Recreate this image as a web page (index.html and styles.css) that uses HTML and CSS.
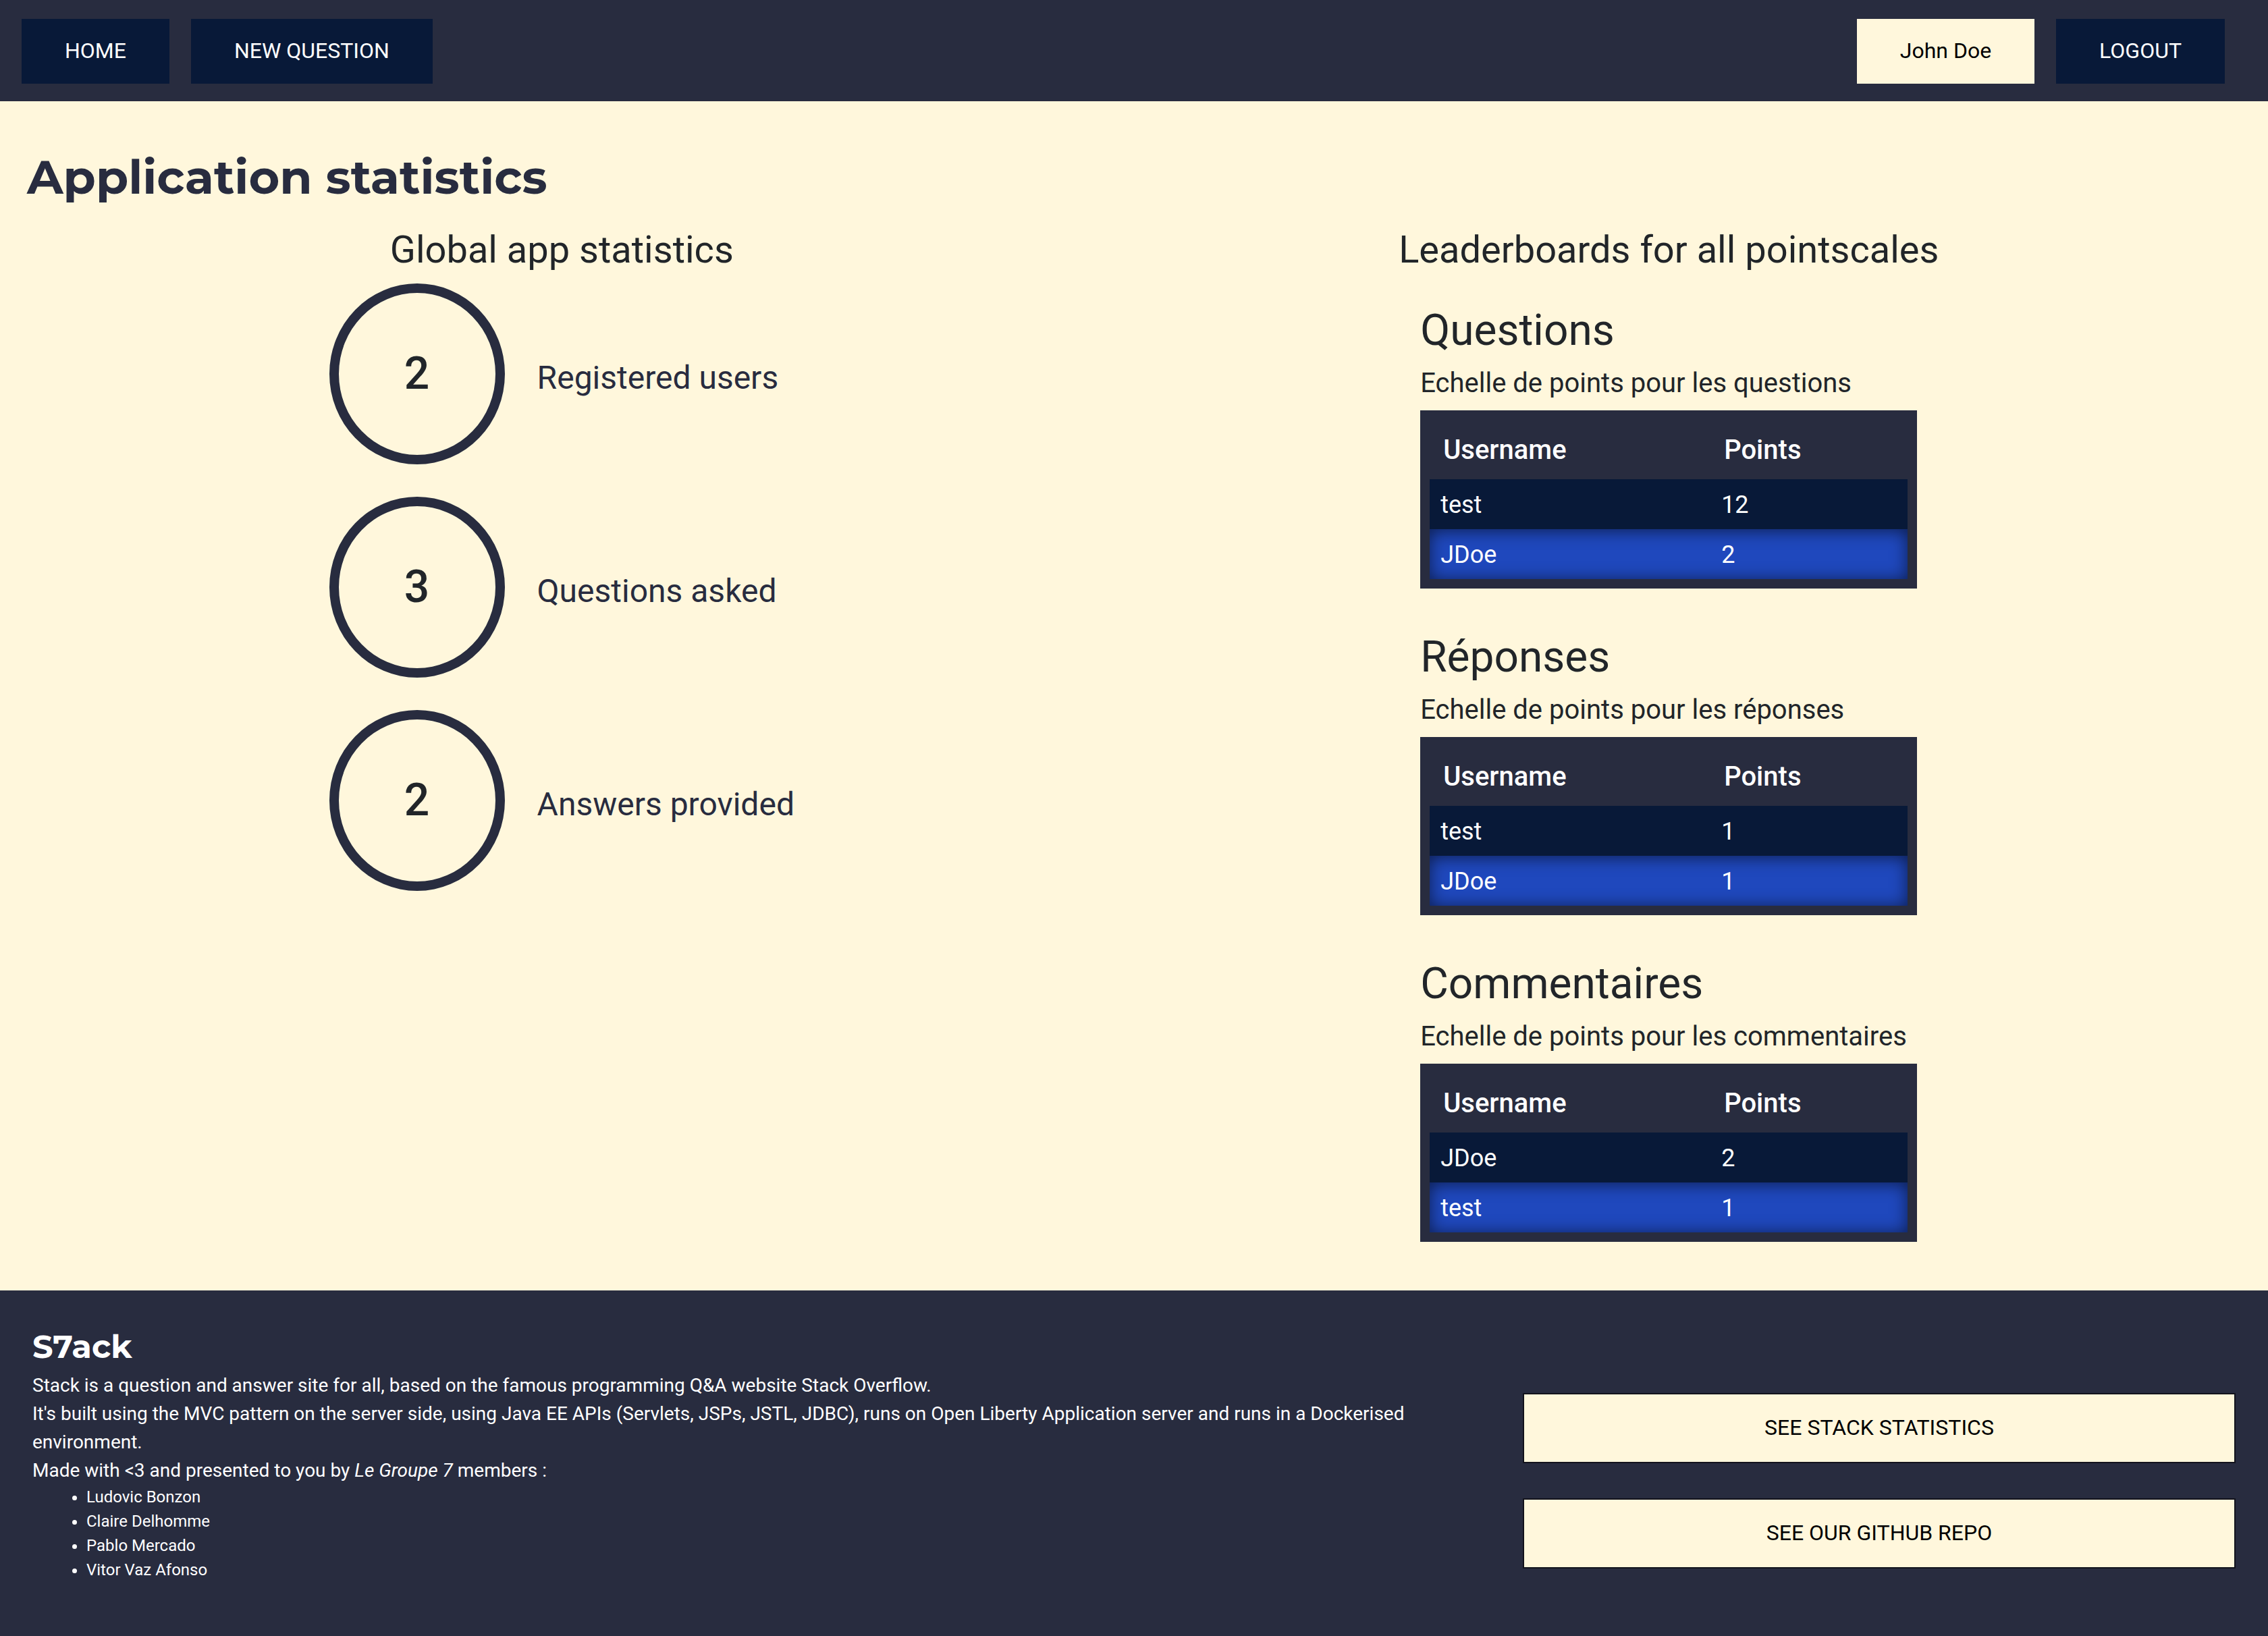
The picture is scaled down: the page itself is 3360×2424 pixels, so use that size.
FILE: index.html
```html
<!DOCTYPE html>
<html lang="en">
<head>
<meta charset="utf-8">
<meta name="viewport" content="width=device-width, initial-scale=1">
<title>S7ack - Application statistics</title>
<link rel="stylesheet" href="styles.css">
</head>
<body>
<header class="topbar">
  <nav class="topbar-group">
    <a class="btn btn-dark" href="#">HOME</a>
    <a class="btn btn-dark" href="#">NEW QUESTION</a>
  </nav>
  <div class="topbar-group">
    <a class="btn btn-light" href="#">John Doe</a>
    <button class="btn btn-dark" type="button">LOGOUT</button>
  </div>
</header>

<main class="content">
  <h1 class="page-title">Application statistics</h1>
  <div class="columns">
    <section class="column">
      <h2 class="column-title">Global app statistics</h2>
      <div class="stats">
        <div class="stat"><span class="stat-value">2</span><span class="stat-label">Registered users</span></div>
        <div class="stat"><span class="stat-value">3</span><span class="stat-label">Questions asked</span></div>
        <div class="stat"><span class="stat-value">2</span><span class="stat-label">Answers provided</span></div>
      </div>
    </section>

    <section class="column">
      <h2 class="column-title">Leaderboards for all pointscales</h2>
      <article class="board">
        <h3 class="board-title">Questions</h3>
        <p class="board-text">Echelle de points pour les questions</p>
        <table class="ranking">
          <thead><tr><th scope="col">Username</th><th scope="col">Points</th></tr></thead>
          <tbody>
            <tr><td>test</td><td>12</td></tr>
            <tr><td>JDoe</td><td>2</td></tr>
          </tbody>
        </table>
      </article>
      <article class="board">
        <h3 class="board-title">Réponses</h3>
        <p class="board-text">Echelle de points pour les réponses</p>
        <table class="ranking">
          <thead><tr><th scope="col">Username</th><th scope="col">Points</th></tr></thead>
          <tbody>
            <tr><td>test</td><td>1</td></tr>
            <tr><td>JDoe</td><td>1</td></tr>
          </tbody>
        </table>
      </article>
      <article class="board">
        <h3 class="board-title">Commentaires</h3>
        <p class="board-text">Echelle de points pour les commentaires</p>
        <table class="ranking">
          <thead><tr><th scope="col">Username</th><th scope="col">Points</th></tr></thead>
          <tbody>
            <tr><td>JDoe</td><td>2</td></tr>
            <tr><td>test</td><td>1</td></tr>
          </tbody>
        </table>
      </article>
    </section>
  </div>
</main>

<footer class="footer">
  <div>
    <h2 class="footer-title">S7ack</h2>
    <p class="footer-text">Stack is a question and answer site for all, based on the famous programming Q&amp;A website Stack Overflow.<br>
    It's built using the MVC pattern on the server side, using Java EE APIs (Servlets, JSPs, JSTL, JDBC), runs on Open Liberty Application server and runs in a Dockerised environment.<br>
    Made with &lt;3 and presented to you by <em>Le Groupe 7</em> members :</p>
    <ul class="members">
      <li>Ludovic Bonzon</li>
      <li>Claire Delhomme</li>
      <li>Pablo Mercado</li>
      <li>Vitor Vaz Afonso</li>
    </ul>
  </div>
  <div class="footer-links">
    <a class="footer-btn" href="#">SEE STACK STATISTICS</a>
    <a class="footer-btn" href="#">SEE OUR GITHUB REPO</a>
  </div>
</footer>
</body>
</html>
```
FILE: styles.css
```css
:root {
  --slate: #282c3f;
  --navy: #081938;
  --blue: #1f48bd;
  --cream: #fff7dc;
  --ink: #212529;
}

* {
  box-sizing: border-box;
}

body {
  display: flex;
  flex-direction: column;
  min-height: 100vh;
  margin: 0;
  background: var(--slate);
  color: var(--ink);
  font-family: Roboto, "Liberation Sans", sans-serif;
  font-size: 32px;
  line-height: 48px;
}

h1, h2, h3, p, ul {
  margin: 0;
  font-weight: 400;
}

/* Top bar */
.topbar {
  display: flex;
  justify-content: space-between;
  padding: 28px 64px 26px 32px;
  background: var(--slate);
}

.topbar-group {
  display: flex;
  gap: 32px;
}

.btn {
  padding: 23px 64px 25px;
  border: 0;
  font: inherit;
  line-height: 48px;
  text-decoration: none;
  cursor: pointer;
}

.btn-dark {
  background: var(--navy);
  color: #fff;
}

.btn-light {
  background: var(--cream);
  color: #000;
}

/* Statistics */
.content {
  padding: 69px 40px 40px;
  background: var(--cream);
}

.page-title {
  margin-bottom: 32px;
  color: var(--slate);
  font-family: Montserrat, Inter, sans-serif;
  font-size: 70px;
  font-weight: 700;
  line-height: 86px;
}

.columns {
  display: flex;
  justify-content: space-around;
  align-items: flex-start;
}

.column-title {
  margin-bottom: 16px;
  font-size: 56px;
  line-height: 67px;
  text-align: center;
}

.stats {
  display: grid;
  gap: 48px;
}

.stat {
  display: flex;
  align-items: baseline;
  gap: 48px;
}

.stat-value {
  width: 260px;
  height: 268px;
  border: 14px solid var(--slate);
  border-radius: 50%;
  font-size: 66px;
  font-weight: 500;
  line-height: 240px;
  text-align: center;
}

.stat-label {
  color: var(--slate);
  font-size: 48px;
}

/* Leaderboards */
.board {
  padding: 32px;
}

.board-title {
  margin-bottom: 16px;
  font-size: 64px;
  line-height: 76px;
}

.board-text {
  margin-bottom: 16px;
  font-size: 40px;
  line-height: 48px;
}

.ranking {
  width: 100%;
  border: 14px solid var(--slate);
  border-collapse: separate;
  border-spacing: 0;
  background: var(--slate);
  color: #fff;
  text-align: left;
}

.ranking th {
  padding: 15px 20px 13px;
  font-size: 40px;
  font-weight: 500;
  line-height: 60px;
}

.ranking th:first-child {
  width: 416px;
}

.ranking th:last-child {
  width: auto;
}

.ranking td {
  padding: 11px 16px 9px;
  font-size: 36px;
  line-height: 54px;
}

.ranking tbody tr {
  background: var(--navy);
}

.ranking tbody tr:nth-child(even) {
  background: var(--blue);
  box-shadow: inset 0 2px 24px rgba(0, 0, 0, 0.6);
}

/* Footer */
.footer {
  display: grid;
  grid-template-columns: minmax(0, 45fr) minmax(0, 22fr);
  gap: 48px;
  padding: 54px 48px 80px;
  background: var(--slate);
  color: #fff;
}

.footer-title {
  margin-bottom: 8px;
  font-family: Montserrat, Inter, sans-serif;
  font-size: 48px;
  font-weight: 700;
  line-height: 58px;
}

.footer-text {
  font-size: 28px;
  line-height: 42px;
}

.members {
  padding-left: 80px;
  font-size: 24px;
  line-height: 36px;
}

.footer-links {
  display: grid;
  gap: 52px;
  align-self: end;
  padding-bottom: 20px;
}

.footer-btn {
  padding: 25px 32px 27px;
  border: 2px solid #12131c;
  background: var(--cream);
  color: #000;
  text-align: center;
  text-decoration: none;
}
```
